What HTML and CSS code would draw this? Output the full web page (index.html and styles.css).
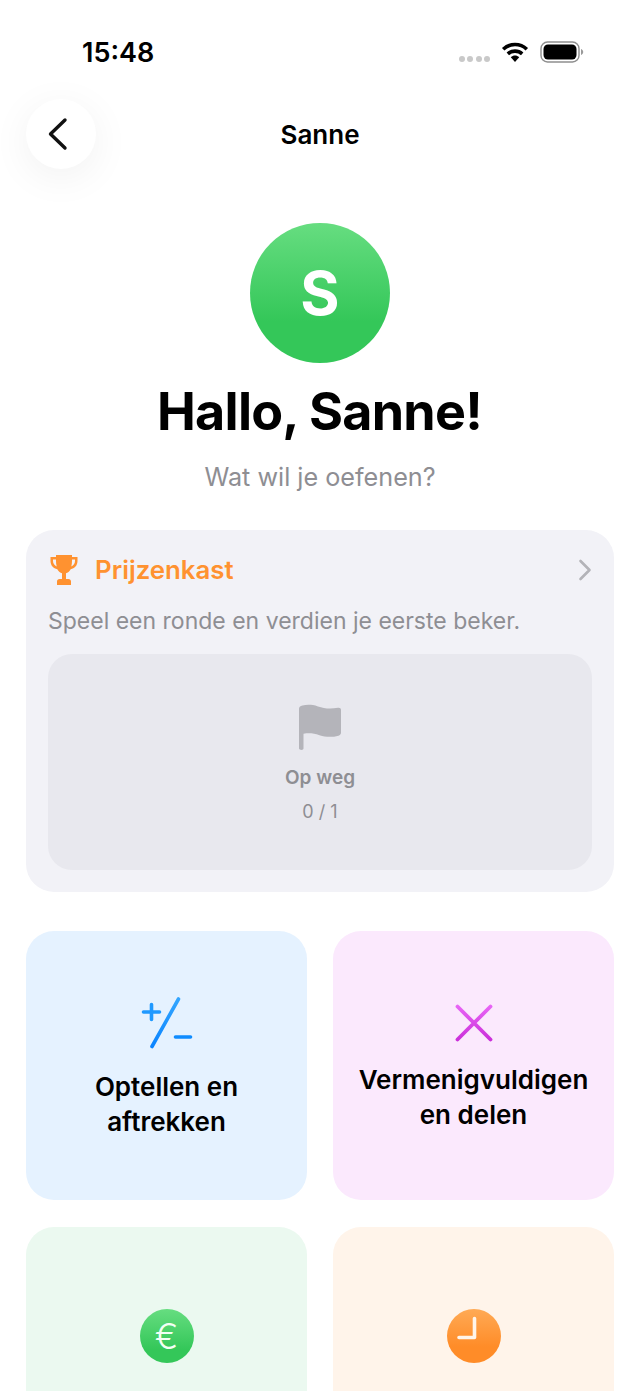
FILE: index.html
```html
<!DOCTYPE html>
<html lang="nl">
<head>
<meta charset="utf-8">
<title>Sanne</title>
<link rel="stylesheet" href="styles.css">
</head>
<body>
<div class="screen">
  <header class="status">
    <span class="time">15:48</span>
    <div class="status-icons">
      <span class="dots"><i></i><i></i><i></i><i></i></span>
      <svg class="wifi" width="28" height="20" viewBox="0 0 28 20"><path d="M2.200 7.200C8.800 1 19.200 1 25.800 7.200" fill="none" stroke="#000" stroke-width="3.600"/><path d="M6.800 11.800C10.800 8.200 17.200 8.200 21.200 11.800" fill="none" stroke="#000" stroke-width="3.600"/><path d="M9.800 15.200C12.200 13 15.800 13 18.200 15.200L14 20Z" fill="#000"/></svg>
      <svg class="battery" width="44" height="22" viewBox="0 0 44 22"><rect x="1" y="1" width="38" height="20" rx="6.500" fill="#fff" stroke="#8e8e8e" stroke-width="1.400"/><rect x="3.500" y="3.500" width="33" height="15" rx="4.500" fill="#000"/><path d="M41 8v6c1.400-.5 2.200-1.700 2.200-3S42.400 8.500 41 8z" fill="#9a9a9a"/></svg>
    </div>
  </header>

  <nav class="nav">
    <button class="back" aria-label="Terug">
      <svg width="24" height="34" viewBox="0 0 24 34"><path d="M20 3 5.500 17 20 31" fill="none" stroke="#111" stroke-width="3.400" stroke-linecap="round" stroke-linejoin="round"/></svg>
    </button>
    <h2 class="nav-title">Sanne</h2>
  </nav>

  <section class="hero">
    <div class="avatar">S</div>
    <h1 class="hello">Hallo, Sanne!</h1>
    <p class="ask">Wat wil je oefenen?</p>
  </section>

  <section class="trophies">
    <div class="trophies-head">
      <svg class="cup" width="30" height="32" viewBox="0 0 30 32"><path d="M7 1h16v2h5.500v4c0 4.500-3 7.500-6.800 8.200-1.200 2.200-3 3.600-4.700 4.100V25h2.500c1.500 0 2.500 1 2.500 2.500V31H8v-3.500C8 26 9 25 10.500 25H13v-5.700c-1.700-.5-3.500-1.900-4.700-4.100C4.500 14.500 1.500 11.500 1.500 7V3H7V1zM4 5.500V7c0 2.500 1.500 4.600 3.700 5.500C7.200 10.800 7 9 7 7V5.500H4zm22 0h-3V7c0 2-.2 3.800-.7 5.500C24.500 11.600 26 9.500 26 7V5.500z" fill="#ff9230" fill-rule="evenodd"/></svg>
      <span class="trophies-title">Prijzenkast</span>
      <svg class="chev" width="14" height="22" viewBox="0 0 14 22"><path d="M2.500 2 11.500 11 2.500 20" fill="none" stroke="#b3b3b8" stroke-width="2.600" stroke-linecap="round" stroke-linejoin="round"/></svg>
    </div>
    <p class="trophies-sub">Speel een ronde en verdien je eerste beker.</p>
    <div class="shelf">
      <svg class="flag" width="44" height="46" viewBox="0 0 44 48" preserveAspectRatio="none"><path d="M1 5C1 3.500 2 2 4.500 1.500 9 .5 14 .5 20 2.500c6 2 11 3 20 1.500 1.700-.3 3 .5 3 2v24c0 1.500-1 2.500-2.500 3-7 2-13 1.500-19-.5-6-2-10-2.500-16-1.500V46.500c0 .9-.8 1.500-2 1.500s-2.500-.6-2.500-1.500V5z" fill="#b4b4ba"/></svg>
      <span class="shelf-name">Op weg</span>
      <span class="shelf-count">0 / 1</span>
    </div>
  </section>

  <section class="tiles">
    <a class="tile tile-blue">
      <svg class="tile-icon" width="52" height="52" viewBox="0 0 52 52"><defs><linearGradient id="gb" x1="0" y1="0" x2="0" y2="1"><stop offset="0" stop-color="#33a6ff"/><stop offset="1" stop-color="#0a84ff"/></linearGradient></defs><path d="M37.500 2 11 49.500" fill="none" stroke="url(#gb)" stroke-width="3.600" stroke-linecap="round"/><path d="M2.500 15h16M10.500 7.500v15" fill="none" stroke="#1f99ff" stroke-width="3.600" stroke-linecap="round"/><path d="M34.500 40h15" fill="none" stroke="#0f8cff" stroke-width="3.600" stroke-linecap="round"/></svg>
      <span class="tile-label">Optellen en<br>aftrekken</span>
    </a>
    <a class="tile tile-pink">
      <svg class="tile-icon" width="38" height="38" viewBox="0 0 38 38"><defs><linearGradient id="gp" x1="0" y1="0" x2="0" y2="38" gradientUnits="userSpaceOnUse"><stop offset="0" stop-color="#e968f7"/><stop offset="1" stop-color="#c92cd8"/></linearGradient></defs><path d="M2.500 2.500 35.500 35.500M35.500 2.500 2.500 35.500" fill="none" stroke="url(#gp)" stroke-width="3.800" stroke-linecap="round"/></svg>
      <span class="tile-label">Vermenigvuldigen<br>en delen</span>
    </a>
    <a class="tile tile-green tile-cut">
      <span class="disc disc-green">€</span>
    </a>
    <a class="tile tile-orange tile-cut">
      <span class="disc disc-orange"><svg width="54" height="54" viewBox="0 0 54 54"><path d="M27.500 9.500v19H12" fill="none" stroke="#fff5ea" stroke-width="3.600" stroke-linecap="round" stroke-linejoin="round"/></svg></span>
    </a>
  </section>
</div>
</body>
</html>
```

FILE: styles.css
```css
* { box-sizing: border-box; }
html, body { margin: 0; padding: 0; background: #fff; }
body { font-family: Inter, "Liberation Sans", sans-serif; color: #000; }
.screen { width: 640px; height: 1391px; overflow: hidden; padding: 0 26px; }

.status { height: 99px; display: flex; justify-content: space-between; align-items: flex-start; padding: 37px 30px 0 56px; }
.time { font-size: 27px; line-height: 32px; font-weight: 600; }
.status-icons { display: flex; align-items: center; gap: 11px; height: 30px; }
.dots { display: flex; gap: 2.500px; margin-top: 14px; }
.dots i { width: 6px; height: 6px; border-radius: 50%; background: #c9c9c9; }
.wifi, .battery { display: block; }

.nav { height: 70px; position: relative; display: flex; align-items: center; justify-content: center; }
.back { position: absolute; left: 0; top: 0; width: 70px; height: 70px; padding: 0; border: 0; border-radius: 50%; background: #fff; box-shadow: 0 8px 40px rgba(0,0,0,.06); display: flex; align-items: center; justify-content: center; }
.back svg { margin-left: -8px; }
.nav-title { margin: 1px 0 0; font-size: 26px; line-height: 32px; font-weight: 600; }

.hero { display: flex; flex-direction: column; align-items: center; padding-top: 54px; }
.avatar { width: 140px; height: 140px; border-radius: 50%; background: linear-gradient(#66dd80, #34c759 70%); color: #fff; font-size: 60px; font-weight: 700; display: flex; align-items: center; justify-content: center; }
.hello { margin: 17px 1px 0 0; font-size: 52px; line-height: 64px; font-weight: 700; letter-spacing: -.75px; }
.ask { margin: 17px 0 0; font-size: 25.2px; line-height: 32px; color: #8e8e93; }

.trophies { margin-top: 37px; height: 362px; border-radius: 28px; background: #f2f2f7; padding: 22px; }
.trophies-head { display: flex; align-items: center; height: 36px; }
.cup { display: block; margin-left: 1px; }
.trophies-title { margin-left: 16px; font-size: 25.800px; line-height: 36px; font-weight: 600; color: #ff9230; }
.chev { margin-left: auto; }
.trophies-sub { margin: 18px 0 0; font-size: 23px; line-height: 30px; color: #8e8e93; white-space: nowrap; }
.shelf { margin-top: 18px; height: 216px; border-radius: 24px; background: #e8e8ee; display: flex; flex-direction: column; align-items: center; padding-top: 50px; }
.flag { display: block; }
.shelf-name { margin-top: 15px; font-size: 19px; line-height: 26px; font-weight: 600; color: #8e8e93; }
.shelf-count { margin-top: 9px; font-size: 18px; line-height: 24px; color: #8e8e93; }

.tiles { margin-top: 39px; display: grid; grid-template-columns: 281px 281px; column-gap: 26px; row-gap: 27px; grid-auto-rows: 269px; }
.tile { border-radius: 28px; display: flex; flex-direction: column; align-items: center; justify-content: center; color: #000; text-align: center; padding-top: 5px; }
.tile-cut { justify-content: flex-start; padding-top: 82px; }
.tile-blue { background: #e5f2ff; }
.tile-pink { background: #fbe9fd; }
.tile-green { background: #ebf9f0; }
.tile-orange { background: #fff4ea; }
.tile-icon { display: block; }
.tile-label { margin-top: 20px; font-size: 26px; line-height: 35px; font-weight: 600; }
.disc { width: 54px; height: 54px; border-radius: 50%; display: flex; align-items: center; justify-content: center; color: #f2fff5; }
.disc svg { display: block; }
.disc-green { background: linear-gradient(#66dd80, #34c759 75%); font-size: 35px; font-weight: 300; }
.disc-orange { background: linear-gradient(#ffaa55, #ff8c28 70%); }
```
